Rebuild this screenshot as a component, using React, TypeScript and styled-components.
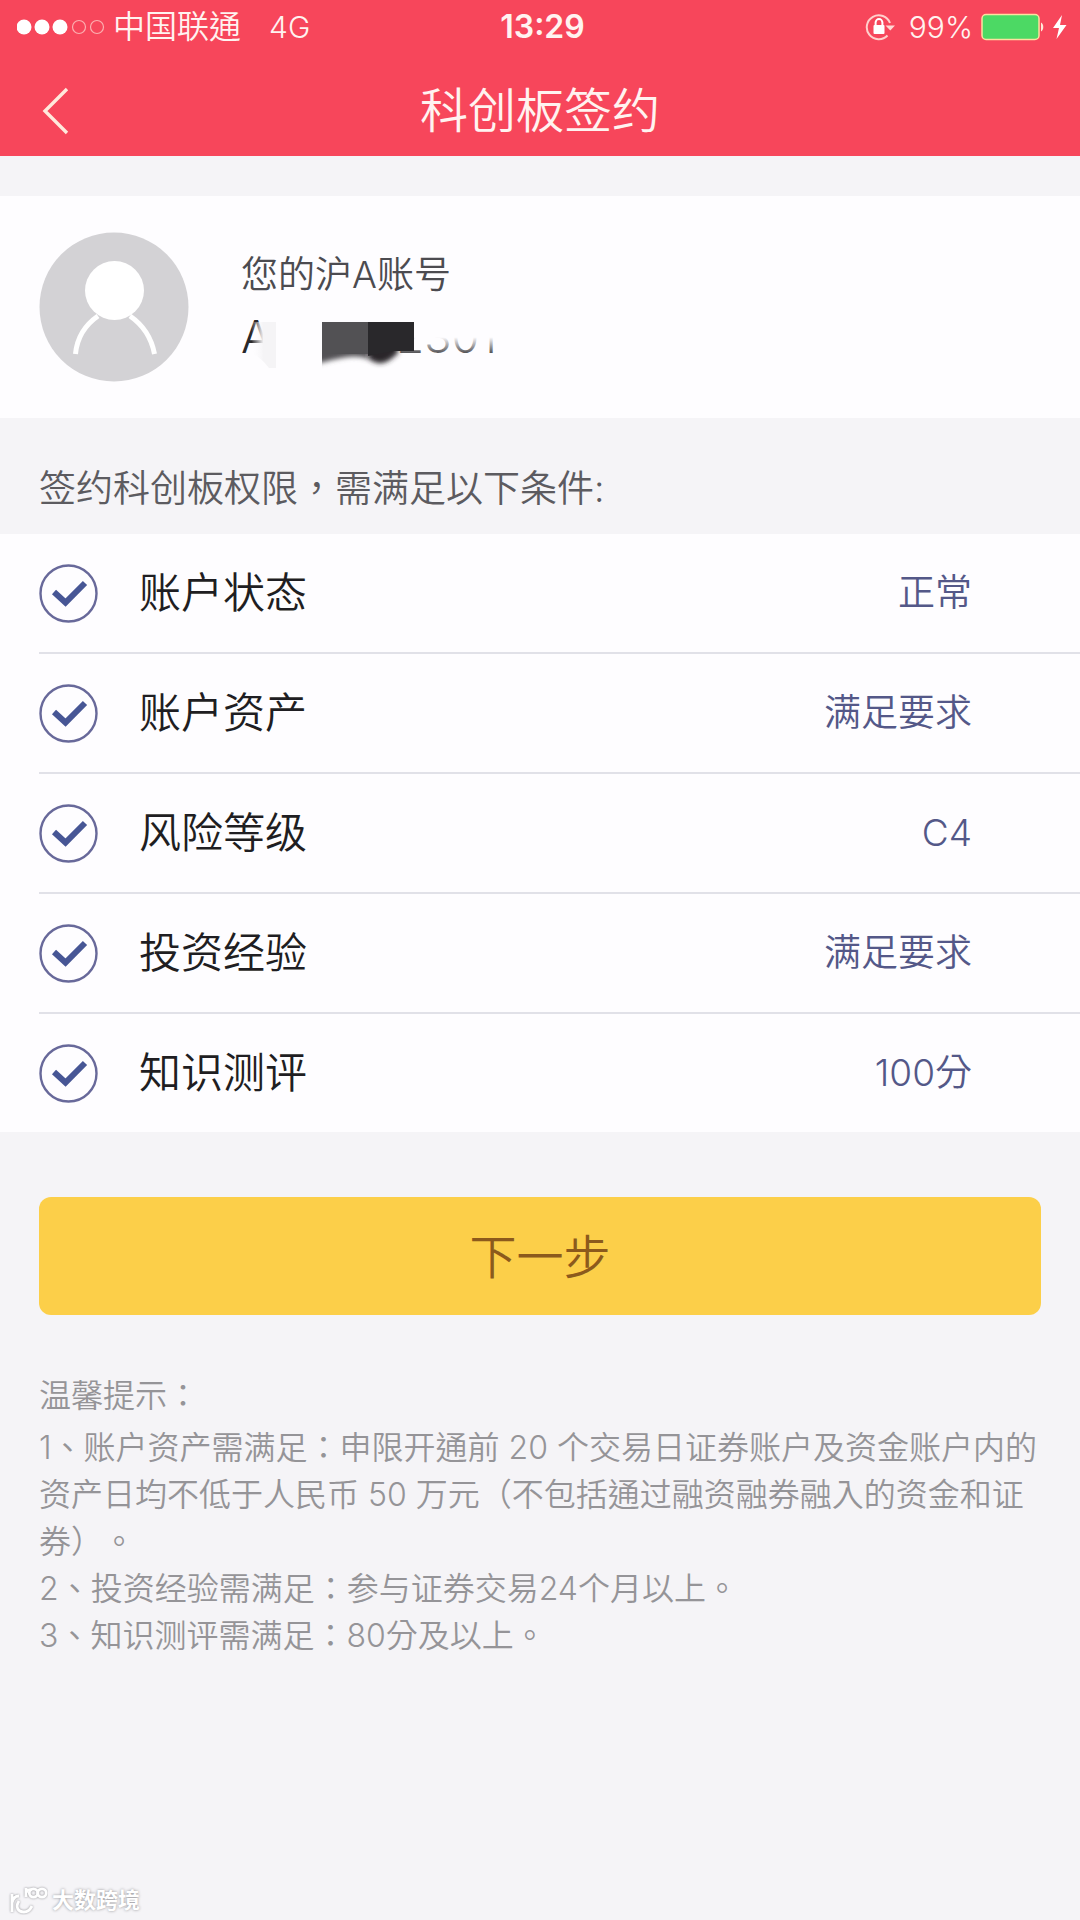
import React from "react";
import styled, { createGlobalStyle } from "styled-components";

const Global = createGlobalStyle`
  * { box-sizing: border-box; }
  body { margin: 0; background: #f5f4f7; }
  h1, h2, p, ul, ol { margin: 0; padding: 0; font-weight: inherit; list-style: none; }
`;

const Screen = styled.div`
  min-height: 100vh;
  display: flex;
  flex-direction: column;
  font-family: Inter, "Noto Sans CJK TC", sans-serif;
  font-weight: 350;
  text-spacing-trim: space-all;
  color: #4c4b50;
  background: #f5f4f7;
`;

const Header = styled.header`
  background: #f7465b;
  color: #fff3f0;
`;

const StatusBar = styled.div`
  display: grid;
  grid-template-columns: 1fr auto 1fr;
  align-items: center;
  height: 54px;
  padding: 0 12px 0 17px;
  font-size: 30px;
  line-height: 40px;
`;

const StatusGroup = styled.div<{ $end?: boolean }>`
  display: flex;
  align-items: center;
  gap: 8px;
  justify-content: ${(p) => (p.$end ? "flex-end" : "flex-start")};
`;

const Carrier = styled.span`
  font-size: 32px;
`;

const Network = styled.span`
  margin-left: 20px;
`;

const Clock = styled.time`
  font-size: 32px;
  font-weight: 600;
`;

const NavBar = styled.nav`
  display: grid;
  grid-template-columns: 80px 1fr 80px;
  align-items: center;
  height: 102px;
  padding: 12px 16px 0;
`;

const BackButton = styled.button`
  display: flex;
  align-items: center;
  justify-content: center;
  width: 80px;
  height: 80px;
  padding: 0;
  border: 0;
  background: none;
  color: inherit;
`;

const Title = styled.h1`
  font-size: 48px;
  line-height: 64px;
  text-align: center;
`;

const Account = styled.section`
  display: flex;
  align-items: center;
  gap: 52px;
  margin-top: 40px;
  padding: 36px 39px;
  background: #fefdff;
`;

const AccountText = styled.div`
  display: flex;
  flex-direction: column;
  gap: 4px;
`;

const AccountLabel = styled.p`
  font-size: 37px;
  line-height: 56px;
`;

const AccountNumber = styled.p`
  position: relative;
  display: flex;
  justify-content: space-between;
  width: 256px;
  font-size: 45px;
  line-height: 60px;
  color: #29282b;
`;

const Mosaic = styled.svg`
  position: absolute;
  left: 0;
  top: 0;
`;

const SectionTitle = styled.h2`
  padding: 43px 39px 17px;
  font-size: 37px;
  line-height: 56px;
  color: #5c5b60;
`;

const Conditions = styled.ul`
  padding-left: 39px;
  background: #fefdff;
`;

const Condition = styled.li`
  display: flex;
  align-items: center;
  min-height: 118px;
  padding-right: 108px;
  color: #1f1e22;

  &:not(:last-child) {
    min-height: 120px;
    border-bottom: 2px solid #e1e1e8;
  }
`;

const ConditionName = styled.span`
  flex: 1;
  margin-left: 40px;
  font-size: 42px;
  line-height: 60px;
`;

const ConditionValue = styled.span`
  font-size: 37px;
  line-height: 56px;
  color: #545888;
`;

const NextButton = styled.button`
  margin: 65px 39px 0;
  height: 118px;
  padding: 0 0 6px;
  border: 0;
  border-radius: 12px;
  background: #fccf49;
  color: #8c5a1c;
  font: inherit;
  font-size: 47px;
`;

const Tips = styled.section`
  padding: 57px 39px 0;
  font-size: 32px;
  line-height: 47px;
  color: #959498;
`;

const TipsTitle = styled.h2`
  margin-bottom: 5px;
  font-size: 32px;
`;

const Watermark = styled.footer`
  display: flex;
  align-items: center;
  gap: 4px;
  margin-top: auto;
  padding: 0 8px 4px;
  font-size: 22px;
  line-height: 32px;
  font-weight: 700;
  color: #fff;
  text-shadow: 0 0 3px #8e8e92;
`;

const LogoStrokes = styled.g`
  filter: drop-shadow(0 0 1px #8e8e92);
`;

const conditions = [
  ["账户状态", "正常"],
  ["账户资产", "满足要求"],
  ["风险等级", "C4"],
  ["投资经验", "满足要求"],
  ["知识测评", "100分"],
];

const SignalDots = () => (
  <svg width="88" height="16" viewBox="0 0 88 16" fill="none" aria-hidden="true">
    {[7, 25, 43].map((x) => (
      <circle key={x} cx={x} cy="8" r="7.5" fill="#fff" />
    ))}
    {[62, 80].map((x) => (
      <circle key={x} cx={x} cy="8" r="6.5" stroke="#fbb0b0" strokeWidth="1.2" />
    ))}
  </svg>
);

const RotationLock = () => (
  <svg width="36" height="28" viewBox="0 0 36 28" fill="none" aria-hidden="true">
    <path d="M22.500 22.500A12 12 0 1 1 25 10" stroke="#ffd0cc" strokeWidth="2" />
    <path d="M20.500 12.500H30L25.300 17.500z" fill="#ffd9d5" />
    <path d="M10.600 12.500V9.500a3.400 3.400 0 0 1 6.800 0v3" stroke="#fff" strokeWidth="2" />
    <rect x="8.500" y="12" width="11" height="9" rx="1" fill="#fff" />
  </svg>
);

const Battery = () => (
  <svg width="87" height="28" viewBox="0 0 87 28" aria-hidden="true">
    <rect x="1" y="1.5" width="57" height="25" rx="4" fill="#4cd964" stroke="#ffe0a0" strokeWidth="1.5" />
    <path d="M60 9.500c3 1 3 8 0 9z" fill="#ffe9d8" />
    <path d="M81 2 72 15h6l-2.500 11L85.500 12h-6.500z" fill="#fff" />
  </svg>
);

const BackIcon = () => (
  <svg width="28" height="48" viewBox="0 0 28 48" fill="none" aria-hidden="true">
    <path d="M25 2 3 24l22 22" stroke="#ffe9dc" strokeWidth="3.4" />
  </svg>
);

const Avatar = () => (
  <svg width="150" height="150" viewBox="0 0 150 150" fill="none" aria-hidden="true">
    <circle cx="75" cy="75" r="74.5" fill="#d3d2d5" />
    <circle cx="75.5" cy="58.5" r="29.5" fill="#fff" />
    <path d="M59 84C46 93 38 106 36.500 122M91 84c13 9 21.500 22 24.500 38" stroke="#fff" strokeWidth="5" />
  </svg>
);

const CheckIcon = () => (
  <svg width="60" height="60" viewBox="0 0 60 60" fill="none" aria-hidden="true">
    <circle cx="29.5" cy="30.5" r="28" stroke="#68699a" strokeWidth="2.4" />
    <path d="M15 29l11.500 10.500L46 20" stroke="#475695" strokeWidth="6" />
  </svg>
);

export default function App() {
  return (
    <Screen>
      <Global />
      <Header>
        <StatusBar>
          <StatusGroup>
            <SignalDots />
            <Carrier>中国联通</Carrier>
            <Network>4G</Network>
          </StatusGroup>
          <Clock>13:29</Clock>
          <StatusGroup $end>
            <RotationLock />
            <span>99%</span>
            <Battery />
          </StatusGroup>
        </StatusBar>
        <NavBar>
          <BackButton aria-label="返回">
            <BackIcon />
          </BackButton>
          <Title>科创板签约</Title>
        </NavBar>
      </Header>
      <Account>
        <Avatar />
        <AccountText>
          <AccountLabel>您的沪A账号</AccountLabel>
          <AccountNumber>
            <span>A</span>
            <span>2301</span>
            <Mosaic width="270" height="64" viewBox="0 0 270 64" aria-hidden="true">
              <defs>
                <linearGradient id="fade" x1="0" y1="0" x2="0" y2="1">
                  <stop offset="0.55" stopColor="#fefdff" />
                  <stop offset="1" stopColor="#fefdff" stopOpacity="0" />
                </linearGradient>
                <linearGradient id="edge" x1="0" y1="0" x2="1" y2="0">
                  <stop offset="0" stopColor="#fefdff" stopOpacity="0" />
                  <stop offset="0.5" stopColor="#f5f4f6" />
                </linearGradient>
                <clipPath id="band">
                  <path d="M81 15h92v48H81z" />
                </clipPath>
                <filter id="soft" x="-20%" y="-20%" width="140%" height="140%">
                  <feGaussianBlur stdDeviation="2.5" />
                </filter>
              </defs>
              <path d="M10 15h25v46h-7c-6-8-12-12-16-14z" fill="url(#edge)" />
              <rect x="150" y="6" width="120" height="44" fill="url(#fade)" />
              <g clipPath="url(#band)">
                <path d="M70 0h57v52c-16-6-30 0-57 6z" fill="#525154" filter="url(#soft)" />
                <path d="M127 0h30v46c-8 8-14 11-20 10q-6-1-10-5z" fill="#29282b" filter="url(#soft)" />
                <path d="M81 15h46v32H81z" fill="#525154" />
                <path d="M127 15h46v29h-20l-26 5z" fill="#29282b" />
              </g>
            </Mosaic>
          </AccountNumber>
        </AccountText>
      </Account>
      <SectionTitle>签约科创板权限，需满足以下条件:</SectionTitle>
      <Conditions>
        {conditions.map(([name, value]) => (
          <Condition key={name}>
            <CheckIcon />
            <ConditionName>{name}</ConditionName>
            <ConditionValue>{value}</ConditionValue>
          </Condition>
        ))}
      </Conditions>
      <NextButton>下一步</NextButton>
      <Tips>
        <TipsTitle>温馨提示：</TipsTitle>
        <p>1、账户资产需满足：申限开通前 20 个交易日证券账户及资金账户内的资产日均不低于人民币 50 万元（不包括通过融资融券融入的资金和证券）。</p>
        <p>2、投资经验需满足：参与证券交易24个月以上。</p>
        <p>3、知识测评需满足：80分及以上。</p>
      </Tips>
      <Watermark>
        <svg width="40" height="30" viewBox="0 0 40 30" fill="none" aria-hidden="true">
          <LogoStrokes stroke="#fff" strokeWidth="2.8">
            <path d="M4 9v18M4 18c1-5 3-7 7-7M11 16c-4 6-1 11 5 11 4 0 6-2 8-6" />
            <path d="M18 3v9M18 8c1-3 3-4 6-3" />
            <circle cx="25.5" cy="8" r="4.2" />
            <circle cx="34" cy="8" r="4.2" />
          </LogoStrokes>
        </svg>
        <span>大数跨境</span>
      </Watermark>
    </Screen>
  );
}
